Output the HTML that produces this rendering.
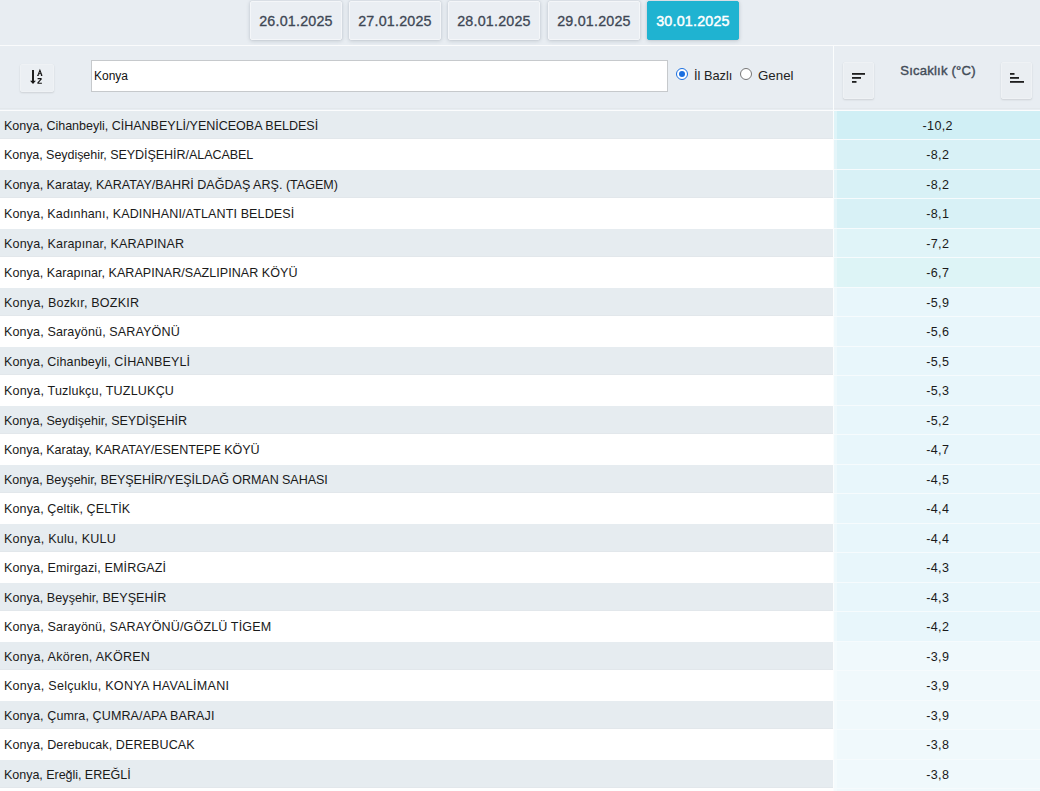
<!DOCTYPE html>
<html><head><meta charset="utf-8"><style>
*{box-sizing:border-box;margin:0;padding:0}
html,body{width:1040px;height:791px;overflow:hidden;background:#fff;font-family:"Liberation Sans",sans-serif}
.top{position:absolute;left:0;top:0;width:1040px;height:110px;background:#e8edf2}
.sep{position:absolute;left:0;top:45px;width:1040px;height:1px;background:#fafbfc}
.btn{position:absolute;top:1px;height:39px;width:92px;background:#eaeef3;border:1px solid #f4f6f9;border-radius:2px;box-shadow:0 1px 4px rgba(20,30,50,.16),0 0 2px rgba(20,30,50,.1);font-size:14.3px;letter-spacing:.2px;color:#3e4755;-webkit-text-stroke:.3px #3e4755;text-align:center;line-height:38px}
.btn.act{background:#1fb3d1;border-color:#1fb3d1;color:#fff;-webkit-text-stroke:.45px #fff}
.sortbtn{position:absolute;left:20px;top:64px;width:33.5px;height:28px;background:#ebeff3;border:1px solid #eff2f5;border-radius:2px;box-shadow:0 1px 2px rgba(0,0,0,.12)}
.inp{position:absolute;left:91px;top:60px;width:577px;height:32px;background:#fff;border:1px solid #c6c9cc;font-size:12px;color:#111;padding-left:2px;line-height:30px}
.radio{position:absolute;top:68px;width:12px;height:12px;border-radius:50%}
.r1{left:676px;border:1.5px solid #1a6fe0;background:#fff}
.r1:after{content:"";position:absolute;left:1.5px;top:1.5px;width:6px;height:6px;border-radius:50%;background:#1a6fe0}
.r2{left:740px;border:1px solid #767676;background:#fff}
.lbl{position:absolute;top:67px;font-size:12.8px;color:#222;line-height:18px}
.vsep{position:absolute;left:833px;top:46px;width:1px;height:745px;background:#fbfdfd;z-index:5}
.hbtn{position:absolute;top:62px;width:31px;height:37px;background:#eaeef2;border:1px solid #eff2f5;border-radius:2px;box-shadow:0 1px 2px rgba(0,0,0,.12)}
.htitle{position:absolute;left:835px;width:206px;top:62px;text-align:center;font-size:13.1px;color:#434c58;-webkit-text-stroke:.4px #434c58;line-height:18px;letter-spacing:.2px}
.sortbtn svg,.hbtn svg{position:absolute;left:-1px;top:-1px}
.tbg{position:absolute;left:834px;top:111px;width:206px;height:680px;background:#f6fbfd}
.hline{position:absolute;left:0;top:110px;width:1040px;height:1px;background:#fbfcfd}
.hdark{position:absolute;left:0;top:108px;width:1040px;height:1px;background:#e3e8ec}
.row{position:absolute;left:0;width:1040px}
.row .name{position:absolute;left:0;top:0;width:833px;height:100%;font-size:12.55px;color:#1a1a1a;padding-left:4px;line-height:30px}
.row.g .name{background:#e6ecf0;box-shadow:inset 0 -1px #e2e7eb}
.row .temp{position:absolute;left:834px;top:0;width:206px;height:100%;box-shadow:inset 3px 0 rgba(255,255,255,.3);font-size:12.55px;color:#1a1a1a;text-align:center;line-height:30px;letter-spacing:.35px;padding-left:1.5px}
</style></head><body>
<div class="top"></div>
<div class="btn" style="left:250px">26.01.2025</div>
<div class="btn" style="left:349px">27.01.2025</div>
<div class="btn" style="left:448px">28.01.2025</div>
<div class="btn" style="left:548px">29.01.2025</div>
<div class="btn act" style="left:647px">30.01.2025</div>
<div class="sep"></div>
<div class="sortbtn"><svg width="34" height="28" viewBox="0 0 34 28"><path d="M13 5.9v12" stroke="#151515" stroke-width="1.9"/><path d="M10.1 16.8h5.8l-2.9 3.2z" fill="#151515"/><path d="M17.9 11.4l2-5.1l2 5.1M18.6 9.7h2.6M17.2 11.45h1.5M20.9 11.45h1.5" stroke="#151515" stroke-width="1.1" fill="none"/><path d="M17.6 14.6h4M21.6 14.6l-4 4.6M17.4 19.25h4.5" stroke="#151515" stroke-width="1.1" fill="none"/></svg></div>
<div class="inp">Konya</div>
<div class="radio r1"></div><div class="lbl" style="left:694px">İl Bazlı</div>
<div class="radio r2"></div><div class="lbl" style="left:758px;font-size:13.3px">Genel</div>
<div class="hbtn" style="left:843px"><svg width="31" height="36"><rect x="9" y="11" width="13" height="1.8" fill="#1e1e1e"/><rect x="9" y="15" width="9" height="1.8" fill="#1e1e1e"/><rect x="9" y="19" width="4.5" height="1.8" fill="#1e1e1e"/></svg></div>
<div class="htitle">Sıcaklık (°C)</div>
<div class="hbtn" style="left:1001px"><svg width="31" height="36"><rect x="9" y="11" width="4.5" height="1.8" fill="#1e1e1e"/><rect x="9" y="15" width="9" height="1.8" fill="#1e1e1e"/><rect x="9" y="19" width="14" height="1.8" fill="#1e1e1e"/></svg></div>
<div class="hdark"></div>
<div class="hline"></div>
<div class="tbg"></div><div class="row g" style="top:111px;height:28px"><div class="name" style="letter-spacing:-0.022px">Konya, Cihanbeyli, CİHANBEYLİ/YENİCEOBA BELDESİ</div><div class="temp" style="background:rgb(208,239,245)">-10,2</div></div>
<div class="row w" style="top:140px;height:29px"><div class="name" style="letter-spacing:-0.065px">Konya, Seydişehir, SEYDİŞEHİR/ALACABEL</div><div class="temp" style="background:rgb(216,241,246)">-8,2</div></div>
<div class="row g" style="top:170px;height:28px"><div class="name" style="letter-spacing:0.01px">Konya, Karatay, KARATAY/BAHRİ DAĞDAŞ ARŞ. (TAGEM)</div><div class="temp" style="background:rgb(216,241,246)">-8,2</div></div>
<div class="row w" style="top:199px;height:29px"><div class="name" style="letter-spacing:0.11px">Konya, Kadınhanı, KADINHANI/ATLANTI BELDESİ</div><div class="temp" style="background:rgb(216,241,246)">-8,1</div></div>
<div class="row g" style="top:229px;height:28px"><div class="name" style="letter-spacing:0.142px">Konya, Karapınar, KARAPINAR</div><div class="temp" style="background:rgb(224,244,248)">-7,2</div></div>
<div class="row w" style="top:258px;height:29px"><div class="name" style="letter-spacing:0.031px">Konya, Karapınar, KARAPINAR/SAZLIPINAR KÖYÜ</div><div class="temp" style="background:rgb(221,244,246)">-6,7</div></div>
<div class="row g" style="top:288px;height:28px"><div class="name" style="letter-spacing:0.195px">Konya, Bozkır, BOZKIR</div><div class="temp" style="background:rgb(232,246,251)">-5,9</div></div>
<div class="row w" style="top:317px;height:29px"><div class="name" style="letter-spacing:0.125px">Konya, Sarayönü, SARAYÖNÜ</div><div class="temp" style="background:rgb(232,246,251)">-5,6</div></div>
<div class="row g" style="top:347px;height:28px"><div class="name" style="letter-spacing:0.118px">Konya, Cihanbeyli, CİHANBEYLİ</div><div class="temp" style="background:rgb(232,246,251)">-5,5</div></div>
<div class="row w" style="top:376px;height:29px"><div class="name" style="letter-spacing:0.175px">Konya, Tuzlukçu, TUZLUKÇU</div><div class="temp" style="background:rgb(232,246,251)">-5,3</div></div>
<div class="row g" style="top:406px;height:28px"><div class="name" style="letter-spacing:-0.014px">Konya, Seydişehir, SEYDİŞEHİR</div><div class="temp" style="background:rgb(232,246,251)">-5,2</div></div>
<div class="row w" style="top:435px;height:29px"><div class="name" style="letter-spacing:-0.039px">Konya, Karatay, KARATAY/ESENTEPE KÖYÜ</div><div class="temp" style="background:rgb(232,246,251)">-4,7</div></div>
<div class="row g" style="top:465px;height:28px"><div class="name" style="letter-spacing:-0.072px">Konya, Beyşehir, BEYŞEHİR/YEŞİLDAĞ ORMAN SAHASI</div><div class="temp" style="background:rgb(232,246,251)">-4,5</div></div>
<div class="row w" style="top:494px;height:29px"><div class="name" style="letter-spacing:0.115px">Konya, Çeltik, ÇELTİK</div><div class="temp" style="background:rgb(232,246,251)">-4,4</div></div>
<div class="row g" style="top:524px;height:28px"><div class="name" style="letter-spacing:0.237px">Konya, Kulu, KULU</div><div class="temp" style="background:rgb(232,246,251)">-4,4</div></div>
<div class="row w" style="top:553px;height:29px"><div class="name" style="letter-spacing:0.129px">Konya, Emirgazi, EMİRGAZİ</div><div class="temp" style="background:rgb(232,246,251)">-4,3</div></div>
<div class="row g" style="top:583px;height:28px"><div class="name" style="letter-spacing:0.046px">Konya, Beyşehir, BEYŞEHİR</div><div class="temp" style="background:rgb(232,246,251)">-4,3</div></div>
<div class="row w" style="top:612px;height:29px"><div class="name" style="letter-spacing:0.131px">Konya, Sarayönü, SARAYÖNÜ/GÖZLÜ TİGEM</div><div class="temp" style="background:rgb(232,246,251)">-4,2</div></div>
<div class="row g" style="top:642px;height:28px"><div class="name" style="letter-spacing:0.25px">Konya, Akören, AKÖREN</div><div class="temp" style="background:rgb(240,249,252)">-3,9</div></div>
<div class="row w" style="top:671px;height:29px"><div class="name" style="letter-spacing:0.253px">Konya, Selçuklu, KONYA HAVALİMANI</div><div class="temp" style="background:rgb(240,249,252)">-3,9</div></div>
<div class="row g" style="top:701px;height:28px"><div class="name" style="letter-spacing:0.1px">Konya, Çumra, ÇUMRA/APA BARAJI</div><div class="temp" style="background:rgb(240,249,252)">-3,9</div></div>
<div class="row w" style="top:730px;height:29px"><div class="name" style="letter-spacing:0.092px">Konya, Derebucak, DEREBUCAK</div><div class="temp" style="background:rgb(240,249,252)">-3,8</div></div>
<div class="row g" style="top:760px;height:28px"><div class="name" style="letter-spacing:-0.05px">Konya, Ereğli, EREĞLİ</div><div class="temp" style="background:rgb(240,249,252)">-3,8</div></div>
<div class="row w" style="top:789px;height:29px"><div class="name" style="letter-spacing:0px"></div><div class="temp" style="background:rgb(240,249,252)">-3,7</div></div>
<div class="vsep"></div>
</body></html>
